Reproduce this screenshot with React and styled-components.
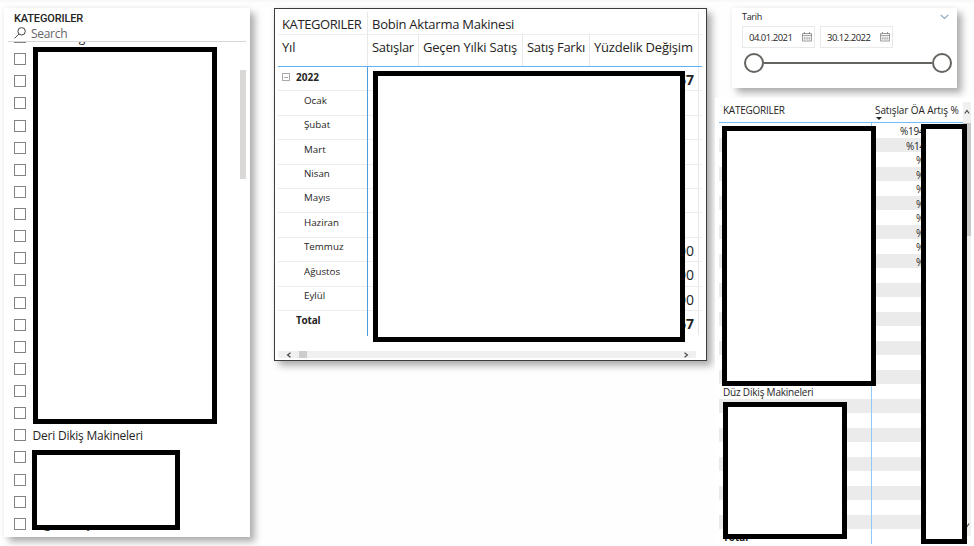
import React from "react";
import styled, { createGlobalStyle } from "styled-components";

const Global = createGlobalStyle`
  * { box-sizing: border-box; }
  body { margin: 0; background: #fff; overflow: hidden; font-family: "Open Sans", "Noto Sans", sans-serif; color: #252423; }
`;

const Page = styled.main`
  width: 974px;
  height: 546px;
  overflow: hidden;
  display: grid;
  grid-template-columns: 246px 433px 259px;
  column-gap: 24px;
  padding: 8px 0 0 4px;
  align-items: start;
  background: linear-gradient(#f6f6f6, #fefefe 3px);
`;

const Panel = styled.section`
  position: relative;
  background: #fff;
  box-shadow: 5px 5px 7px rgba(0, 0, 0, 0.3), 0 0 5px rgba(0, 0, 0, 0.06);
`;

const Text = styled.span`
  display: block;
  font-size: ${(p) => p.$size || 12}px;
  font-weight: ${(p) => (p.$bold ? 700 : 400)};
  letter-spacing: ${(p) => p.$track || 0}px;
  color: ${(p) => p.$color || "#252423"};
  white-space: pre;
  line-height: 1;
`;

const Cover = styled.div`
  position: absolute;
  left: ${(p) => p.$x}px;
  top: ${(p) => p.$y}px;
  width: ${(p) => p.$w}px;
  height: ${(p) => p.$h}px;
  border: 5px solid #000;
  background: #fff;
`;

/* Category slicer */
const Slicer = styled(Panel)`
  height: 529px;
  padding: 4px;
`;
const SlicerTitle = styled.h1`
  margin: 0;
  padding-left: 6px;
  height: 14px;
  font: 500 11px/13px Roboto, sans-serif;
  letter-spacing: -0.15px;
`;
const SearchBar = styled.div`
  display: flex;
  align-items: center;
  gap: 5px;
  height: 16px;
  padding-left: 6px;
  border-bottom: 1px solid #d8d8d8;
  svg { margin-bottom: 2px; }
  ${Text} { padding-top: 1px; }
`;
const CheckList = styled.div`
  position: relative;
  height: 491px;
  overflow: hidden;
`;
const CheckRows = styled.div`
  margin-top: -16px;
`;
const CheckRow = styled.label`
  display: flex;
  align-items: center;
  height: 22.14px;
  padding-left: 6px;
  gap: 6.5px;
  ${Text} { padding-top: 1px; }
`;
const Checkbox = styled.i`
  width: 12px;
  height: 12px;
  border: 1px solid #858381;
  background: #fff;
`;
const SlicerThumb = styled.div`
  position: absolute;
  right: 4px;
  top: 62px;
  width: 6px;
  height: 109px;
  background: #d9d8d7;
`;

/* Sales matrix */
const Matrix = styled(Panel)`
  height: 353px;
  border: 1px solid #3c3c3c;
  padding: 3px 4px 0 3px;
`;
const MatrixTop = styled.div`
  display: grid;
  grid-template-columns: 90px 331px 4px;
  height: 23px;
  border-bottom: 1px solid #eee;
`;
const MatrixHeads = styled.div`
  display: grid;
  grid-template-columns: 90px 51px 104px 67px 109px 4px;
  height: 32px;
  border-bottom: 1px solid #62b0f3;
`;
const HeadCell = styled.div`
  padding: 6px 0 0 4px;
  border-right: 1px solid #e8e8e8;
`;
const MatrixRow = styled.div`
  display: grid;
  grid-template-columns: 90px 331px 4px;
  height: 24.4px;
  border-bottom: ${(p) => (p.$total ? 0 : 1)}px solid #ececec;
`;
const RowHead = styled.div`
  display: flex;
  gap: 6px;
  padding: ${(p) => (p.$indent ? "4.5px 0 0 26px" : "4.5px 0 0 4px")};
  margin-bottom: -1px;
  border-right: 1px solid #4c9ce0;
  svg { margin-top: 1px; }
`;
const Spacer = styled.i`
  width: 8px;
`;
const ValueCell = styled.div`
  padding: 6px 4px 0 0;
  text-align: right;
  border-right: 1px solid #e8e8e8;
`;
const HScroll = styled.div`
  display: flex;
  align-items: center;
  width: 418px;
  height: 7px;
  margin-top: 16px;
  padding: 0 7px 0 8px;
  background: #f0f0f0;
`;
const HThumb = styled.div`
  width: 8px;
  height: 7px;
  margin: 0 auto 0 7px;
  background: #cdcdcd;
`;

/* Right column */
const RightColumn = styled.div`
  margin-left: -16px;
`;
const DateCard = styled(Panel)`
  width: 225px;
  height: 80px;
  margin-left: 17px;
  padding: 4px 5px 0 10px;
`;
const DateHead = styled.div`
  display: flex;
  justify-content: space-between;
  height: 14px;
  padding-right: 3px;
`;
const DateInputs = styled.div`
  display: flex;
  gap: 5px;
`;
const DateField = styled.div`
  display: flex;
  align-items: center;
  justify-content: space-between;
  width: 73px;
  height: 22px;
  padding: 0 2px 0 6px;
  border: 1px solid #e9e9e9;
  ${Text} { padding-top: 1px; }
  svg { margin-bottom: 1px; }
`;
const Slider = styled.div`
  display: flex;
  align-items: center;
  height: 20px;
  margin: 5px 0 0 2px;
`;
const Knob = styled.i`
  width: 20px;
  height: 20px;
  border: 2px solid #666461;
  border-radius: 50%;
`;
const Track = styled.i`
  flex: 1;
  height: 2.5px;
  background: #666461;
`;

const Growth = styled.section`
  position: relative;
  height: 448px;
  margin-top: 10px;
  padding: 4px 0 0 4px;
  background: #fff;
  display: grid;
  grid-template-columns: 244px 8px;
`;
const GrowthHead = styled.div`
  display: grid;
  grid-template-columns: 152px 92px;
  height: 21px;
  border-bottom: 1px solid #74bcf8;
`;
const GrowthTitle = styled.div`
  padding: 3px 0 0 4px;
  svg { display: block; margin: 2px 0 0 1px; }
`;
const GrowthRow = styled.div`
  display: grid;
  grid-template-columns: 152px 1fr;
  height: 14.5px;
  background: ${(p) => (p.$alt ? "#ebebeb" : "#fff")};
`;
const NameCell = styled.div`
  padding: 3px 0 0 4px;
`;
const PercentCell = styled.div`
  display: flex;
  justify-content: flex-start;
  padding: 3px 0 0 ${(p) => p.$inset}px;
  border-left: 1px solid #92c8f5;
`;
const VScroll = styled.div`
  height: 434px;
  display: flex;
  flex-direction: column;
  align-items: center;
  background: #f0f0f0;
  svg { margin: 7px 0 8px; flex: none; }
`;
const VThumb = styled.div`
  width: 8px;
  height: 113px;
  margin-bottom: auto;
  background: #c8c8c8;
`;

const Arrow = ({ d, size = 6, color = "#444", weight = 1.1 }) => (
  <svg width={size} height={size} viewBox="0 0 6 6" fill="none" stroke={color} strokeWidth={weight}>
    <path d={d} />
  </svg>
);
const SearchIcon = () => (
  <svg width="12" height="12" viewBox="0 0 12 12" fill="none" stroke="#444" strokeWidth="1">
    <circle cx="7.6" cy="4.3" r="3.7" />
    <path d="M4.9 7 0.5 11.4" />
  </svg>
);
const CalendarIcon = () => (
  <svg width="10" height="10" viewBox="0 0 10 10" fill="none" stroke="#858380" strokeWidth=".8">
    <path d="M.5 1.5h9v7.5h-9zM.5 3.4h9M2.5 0v2M7.5 0v2" />
    <path d="M2.3 4.5v3.6M4.1 4.5v3.6M5.9 4.5v3.6M7.7 4.5v3.6M1.5 6.2h7" stroke="#b5b5b5" />
  </svg>
);
const CollapseIcon = () => (
  <svg width="8" height="8" viewBox="0 0 8 8" fill="none" stroke="#aaa" shapeRendering="crispEdges">
    <path d="M.5 .5h7v7h-7zM2 4.5h4" />
  </svg>
);

const checkLabels = { 0: "                g", 18: "Deri Dikiş Makineleri", 22: "    g            ş" };
const months = [
  ["Ocak"], ["Şubat"], ["Mart"], ["Nisan"], ["Mayıs"], ["Haziran"],
  ["Temmuz", "00"], ["Ağustos", "00"], ["Eylül", "00"],
];
const percents = ["%194", "%14", "%", "%", "%", "%", "%", "%", "%", "%"];
const percentInset = { 4: 28, 3: 34, 1: 44 };

export default function App() {
  return (
    <>
      <Global />
      <Page>
        <Slicer>
          <SlicerTitle>KATEGORILER</SlicerTitle>
          <SearchBar>
            <SearchIcon />
            <Text $size={12} $track={-0.3} $color="#666">Search</Text>
          </SearchBar>
          <CheckList>
            <CheckRows>
              {Array.from({ length: 23 }, (_, i) => (
                <CheckRow key={i}>
                  <Checkbox />
                  {checkLabels[i] && <Text $size={12} $track={-0.22}>{checkLabels[i]}</Text>}
                </CheckRow>
              ))}
            </CheckRows>
          </CheckList>
          <SlicerThumb />
          <Cover $x={29} $y={39} $w={184} $h={377} />
          <Cover $x={28} $y={442} $w={148} $h={80} />
        </Slicer>

        <Matrix>
          <MatrixTop>
            <HeadCell><Text $size={13} $track={-0.4}>KATEGORILER</Text></HeadCell>
            <HeadCell><Text $size={13} $track={-0.24}>Bobin Aktarma Makinesi</Text></HeadCell>
          </MatrixTop>
          <MatrixHeads>
            <HeadCell><Text $size={13} $track={-0.2}>Yıl</Text></HeadCell>
            <HeadCell><Text $size={13} $track={-0.3}>Satışlar</Text></HeadCell>
            <HeadCell><Text $size={13} $track={-0.2}>Geçen Yılki Satış</Text></HeadCell>
            <HeadCell><Text $size={13} $track={-0.3}>Satış Farkı</Text></HeadCell>
            <HeadCell><Text $size={13} $track={-0.2}>Yüzdelik Değişim</Text></HeadCell>
          </MatrixHeads>
          <MatrixRow>
            <RowHead><CollapseIcon /><Text $size={10} $bold>2022</Text></RowHead>
            <ValueCell><Text $size={14} $bold>67</Text></ValueCell>
          </MatrixRow>
          {months.map(([name, value]) => (
            <MatrixRow key={name}>
              <RowHead $indent><Text $size={9.75}>{name}</Text></RowHead>
              <ValueCell>{value && <Text $size={14}>{value}</Text>}</ValueCell>
            </MatrixRow>
          ))}
          <MatrixRow $total>
            <RowHead><Spacer /><Text $size={10} $bold $track={-0.2}>Total</Text></RowHead>
            <ValueCell><Text $size={14} $bold>67</Text></ValueCell>
          </MatrixRow>
          <HScroll>
            <Arrow d="M4.5 .8 1.5 3l3 2.2" />
            <HThumb />
            <Arrow d="M1.5 .8l3 2.2-3 2.2" />
          </HScroll>
          <Cover $x={98} $y={62} $w={312} $h={271} />
        </Matrix>

        <RightColumn>
          <DateCard>
            <DateHead>
              <Text $size={9} $track={-0.3}>Tarih</Text>
              <Arrow size={9} color="#8aa9c0" weight={0.7} d="M.5 2 3 4.3 5.5 2" />
            </DateHead>
            <DateInputs>
              <DateField><Text $size={9.5} $track={-0.5}>04.01.2021</Text><CalendarIcon /></DateField>
              <DateField><Text $size={9.5} $track={-0.5}>30.12.2022</Text><CalendarIcon /></DateField>
            </DateInputs>
            <Slider><Knob /><Track /><Knob /></Slider>
          </DateCard>
          <Growth>
            <div>
              <GrowthHead>
                <GrowthTitle><Text $size={10} $track={-0.25}>KATEGORILER</Text></GrowthTitle>
                <GrowthTitle>
                  <Text $size={10} $track={-0.1}>Satışlar ÖA Artış %</Text>
                  <svg width="6" height="3" viewBox="0 0 6 3"><path d="M0 0h6L3 3z" fill="#222" /></svg>
                </GrowthTitle>
              </GrowthHead>
              {Array.from({ length: 29 }, (_, i) => (
                <GrowthRow key={i} $alt={i % 2 === 1}>
                  <NameCell>
                    {i === 18 && <Text $size={10} $track={-0.2}>Düz Dikiş Makineleri</Text>}
                    {i === 28 && <Text $size={10} $bold>Total</Text>}
                  </NameCell>
                  <PercentCell $inset={percents[i] ? percentInset[percents[i].length] : 0}>
                    {percents[i] && <Text $size={10} $track={-0.3}>{percents[i]}</Text>}
                  </PercentCell>
                </GrowthRow>
              ))}
            </div>
            <VScroll>
              <Arrow d="M.8 4.5 3 1.5l2.2 3" />
              <VThumb />
              <Arrow d="M.8 1.5 3 4.5l2.2-3" />
            </VScroll>
            <Cover $x={7} $y={28} $w={154} $h={260} />
            <Cover $x={8} $y={304} $w={124} $h={137} />
            <Cover $x={206} $y={26} $w={46} $h={420} />
          </Growth>
        </RightColumn>
      </Page>
    </>
  );
}
